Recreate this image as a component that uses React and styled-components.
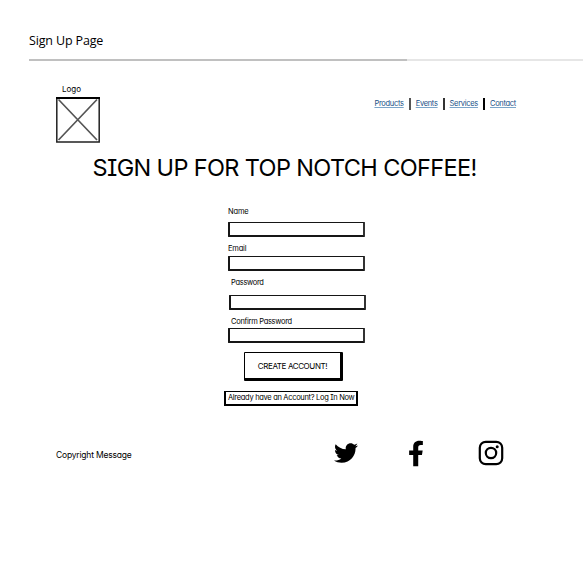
import React from "react";
import styled, { createGlobalStyle } from "styled-components";
import { FaTwitter, FaFacebookF } from "react-icons/fa";

const GlobalStyle = createGlobalStyle`
  * { box-sizing: border-box; }
  body {
    margin: 0;
    background: #fff;
    color: #000;
    font-family: Inter, "Liberation Sans", sans-serif;
    font-feature-settings: "cv08" 1, "cv11" 1;
    white-space: nowrap;
  }
`;

const Page = styled.div`
  width: 583px;
  height: 584px;
  overflow: hidden;
  display: flex;
  flex-direction: column;
`;

const PageTitle = styled.div`
  margin: 32px 0 0 29px;
  height: 27px;
  font: 400 12.5px/18px "Open Sans", "Noto Sans", sans-serif;
  letter-spacing: -0.15px;
`;

const Divider = styled.div`
  margin-left: 29px;
  height: 2px;
  background: #e6e6e6;
`;

const DividerAccent = styled.div`
  width: 378px;
  height: 2px;
  background: #c0c0c0;
`;

const Header = styled.header`
  display: flex;
  align-items: flex-start;
  justify-content: space-between;
  height: 92px;
  padding: 22px 67px 0 56px;
`;

const Brand = styled.div`
  width: 44px;
`;

const BrandLabel = styled.div`
  height: 14px;
  padding-left: 6px;
  font-size: 8px;
  line-height: 12px;
`;

const LogoBox = styled.svg`
  display: block;
`;

const Nav = styled.nav`
  display: flex;
  align-items: center;
  padding-top: 14px;
`;

const NavLink = styled.a`
  padding-top: 1px;
  color: #174f86;
  font-size: 7.5px;
  line-height: 12px;
  letter-spacing: -0.3px;
  text-decoration: underline;
  text-decoration-color: #7ba5c9;
  text-underline-offset: 1px;
`;

const Separator = styled.i`
  width: 2px;
  height: 12px;
  margin: 0 5px;
  background: ${(p) => p.$color};
`;

const Headline = styled.h1`
  margin: 0 0 0 92.5px;
  height: 52px;
  font-size: 23.5px;
  font-weight: 400;
  line-height: 30px;
  letter-spacing: -0.64px;
`;

const Form = styled.form`
  display: flex;
  flex-direction: column;
  width: 139px;
  margin-left: 228px;
`;

const Label = styled.label`
  height: ${(p) => p.$height}px;
  padding: 1px 0 0 ${(p) => p.$indent || 0}px;
  font-size: 7.5px;
  line-height: 12px;
  letter-spacing: ${(p) => p.$tracking || -0.3}px;
`;

const Field = styled.input`
  width: 137px;
  height: 15px;
  margin: 0 0 ${(p) => p.$gap}px ${(p) => p.$shift || 0}px;
  padding: 0 3px;
  border: 2px solid #161616;
  border-top-width: 1px;
  border-right-color: #333;
  border-radius: 1px;
  background: #fff;
  font: inherit;
  font-size: 8px;
  outline: none;
`;

const SubmitButton = styled.button`
  width: 99px;
  height: 29px;
  margin: 0 0 10px 16px;
  padding: 0;
  border: solid #000;
  border-width: 1px 3px 3px 1px;
  border-radius: 1px;
  background: #fff;
  color: #000;
  font: inherit;
  font-feature-settings: inherit;
  font-size: 8px;
  letter-spacing: -0.4px;
`;

const LoginLink = styled.a`
  width: 134px;
  height: 15px;
  margin-left: -4px;
  border: 2px solid #000;
  border-top-width: 1px;
  color: #000;
  font-size: 7.5px;
  line-height: 12px;
  letter-spacing: -0.31px;
  padding-left: 2px;
`;

const Footer = styled.footer`
  display: flex;
  align-items: center;
  height: 30px;
  margin: 32px 0 0 56px;
`;

const Copyright = styled.div`
  width: 278px;
  font-size: 8.5px;
  line-height: 12px;
  letter-spacing: -0.2px;
  padding-top: 4px;
`;

const SocialLinks = styled.div`
  display: flex;
  align-items: center;
`;

const SocialLink = styled.a`
  display: flex;
  justify-content: center;
  width: ${(p) => p.$width}px;
  margin-right: ${(p) => p.$gap || 0}px;
  color: #000;
`;

export default function App() {
  return (
    <>
      <GlobalStyle />
      <Page>
        <PageTitle>Sign Up Page</PageTitle>
        <Divider><DividerAccent /></Divider>
        <Header>
          <Brand>
            <BrandLabel>Logo</BrandLabel>
            <LogoBox width="44" height="46" viewBox="0 0 44 46" fill="none">
              <path d="M2.5 2.5 41 43M41 2.5 2.5 43" stroke="#555" strokeWidth="1.7" />
              <path d="M.8 1V45H43.2V1Z" stroke="#222" strokeWidth="1.5" />
              <path d="M0 1H44" stroke="#000" strokeWidth="2" />
            </LogoBox>
          </Brand>
          <Nav>
            <NavLink>Products</NavLink>
            <Separator $color="#555" />
            <NavLink>Events</NavLink>
            <Separator $color="#333" />
            <NavLink>Services</NavLink>
            <Separator $color="#000" />
            <NavLink>Contact</NavLink>
          </Nav>
        </Header>
        <Headline>SIGN UP FOR TOP NOTCH COFFEE!</Headline>
        <Form>
          <Label $height={17} $tracking={-0.15}>Name</Label>
          <Field $gap={5} />
          <Label $height={14} $tracking={-0.2}>Email</Label>
          <Field $gap={5} />
          <Label $height={19} $indent={3}>Password</Label>
          <Field $gap={5} $shift={1} />
          <Label $height={13} $indent={3}>Confirm Password</Label>
          <Field $gap={9} />
          <SubmitButton type="button">CREATE ACCOUNT!</SubmitButton>
          <LoginLink>Already have an Account? Log In Now</LoginLink>
        </Form>
        <Footer>
          <Copyright>Copyright Message</Copyright>
          <SocialLinks>
            <SocialLink $width={24} $gap={50}><FaTwitter size={24} /></SocialLink>
            <SocialLink $width={16} $gap={54}><FaFacebookF size={27} /></SocialLink>
            <SocialLink $width={26}>
              <svg width="26" height="26" viewBox="0 0 26 26" fill="none" stroke="currentColor" strokeWidth="2.2">
                <rect x="1.8" y="1.8" width="22.4" height="22.4" rx="6" />
                <circle cx="13" cy="13" r="5.2" />
                <circle cx="19.2" cy="6.8" r="1.5" fill="currentColor" stroke="none" />
              </svg>
            </SocialLink>
          </SocialLinks>
        </Footer>
      </Page>
    </>
  );
}
